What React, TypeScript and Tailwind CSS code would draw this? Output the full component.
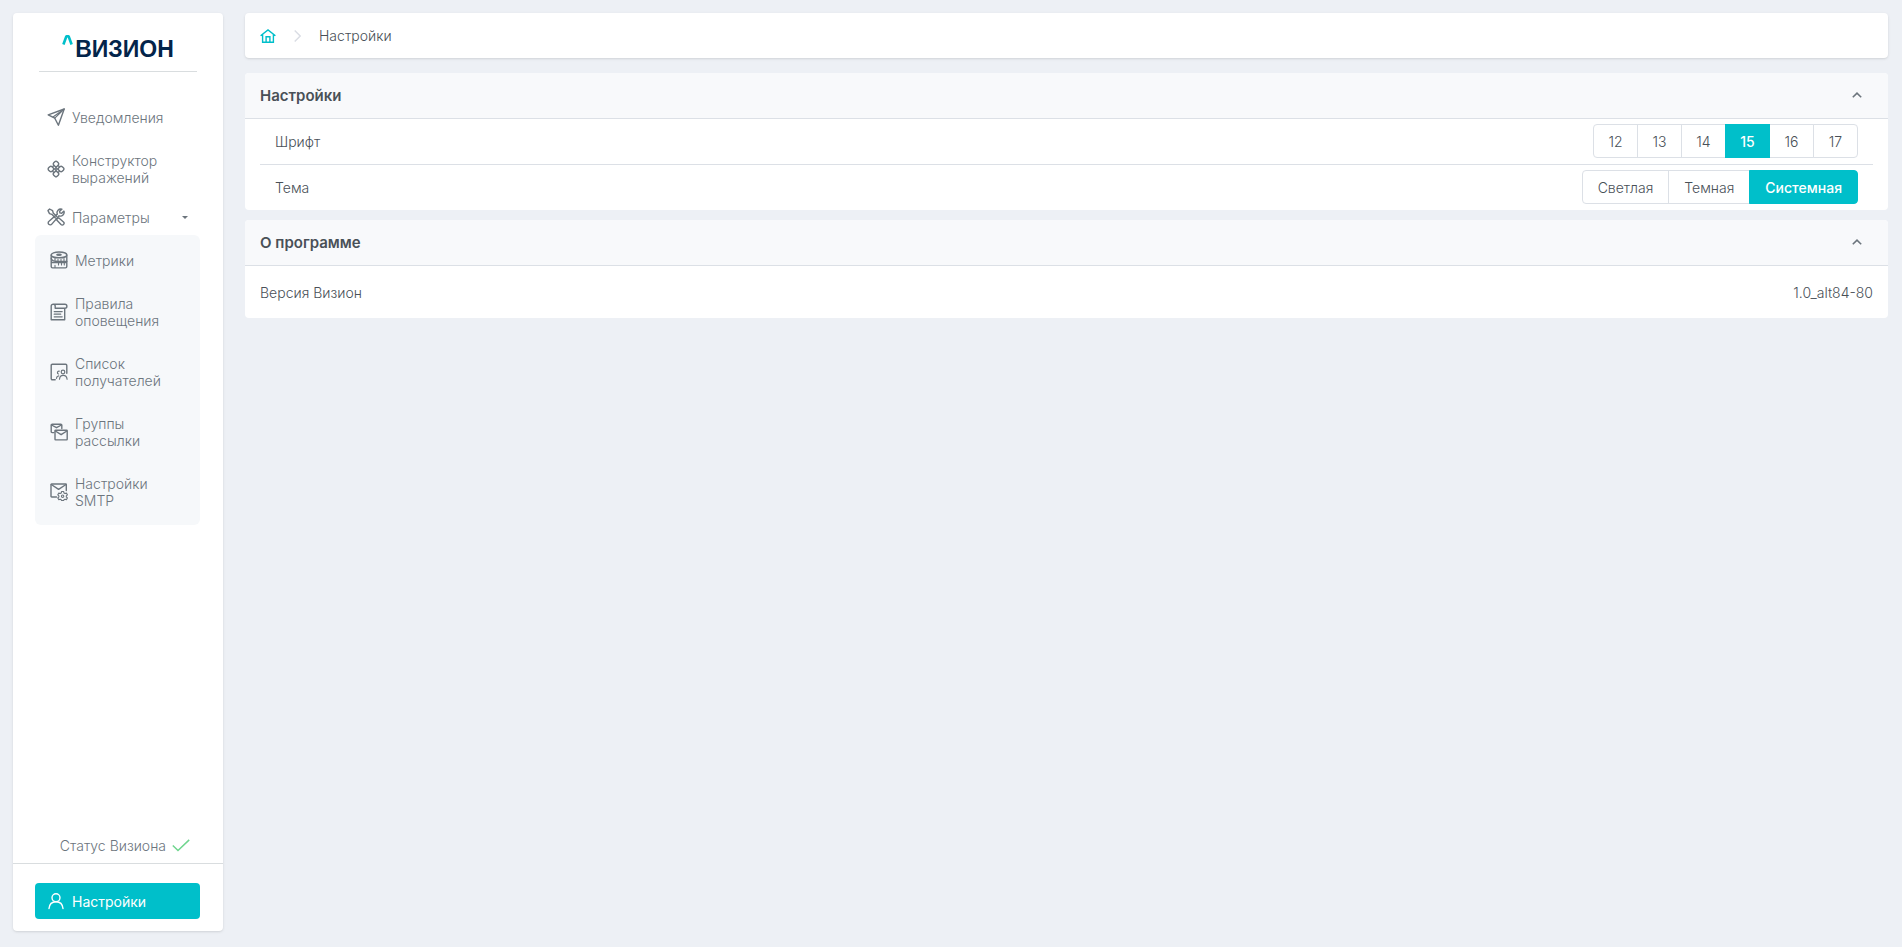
import { useState, ReactNode } from "react";
import clsx from "clsx";

const fontSizes = ["12", "13", "14", "15", "16", "17"];
const themes = ["Светлая", "Темная", "Системная"];

function Icon({ children }: { children: ReactNode }) {
  return (
    <svg
      viewBox="0 0 18 18"
      className="size-[18px] shrink-0"
      fill="none"
      stroke="currentColor"
      strokeWidth="1.4"
      strokeLinecap="round"
      strokeLinejoin="round"
      aria-hidden="true"
    >
      {children}
    </svg>
  );
}

function SendIcon() {
  return (
    <Icon>
      <path d="M17.2 1 1.2 6.8l6.6 3.4 3.6 7z" />
      <path d="M17.2 1 7.8 10.2M17.2 1 6 9" strokeWidth="1.1" />
    </Icon>
  );
}

function BlocksIcon() {
  return (
    <Icon>
      <rect x="6.6" y="1.5" width="4.8" height="4.8" rx="1.6" transform="rotate(45 9 3.9)" />
      <rect x="6.6" y="11.7" width="4.8" height="4.8" rx="1.6" transform="rotate(45 9 14.1)" />
      <rect x="1.5" y="6.6" width="4.8" height="4.8" rx="1.6" transform="rotate(45 3.9 9)" />
      <rect x="11.7" y="6.6" width="4.8" height="4.8" rx="1.6" transform="rotate(45 14.1 9)" />
      <path d="m5.8 6.6.8-.8M11.400 5.800l.8.8M5.800 11.400l.8.8M12.200 11.400l-.8.8M9 7.600 10.400 9 9 10.400 7.600 9z" />
    </Icon>
  );
}

function ToolsIcon() {
  return (
    <Icon>
      <path d="M1 2.600 2.600 1l3 1.600.6 2.300 3.600 3.700M1 2.600l1.500 3 2.300.7 3.600 3.600" />
      <path d="m10.300 10.500 1.600-.6 4.600 4.200a1.700 1.700 0 0 1-2.500 2.500l-4.300-4.500z" />
      <path d="M14.900 1.200a3.700 3.700 0 0 0-4.600 4.900L2 13.300a2 2 0 1 0 2.800 2.800l7.300-8.300a3.700 3.700 0 0 0 4.800-4.700l-2.200 2.100-1.800-.3-.3-1.700z" />
    </Icon>
  );
}

function MetricsIcon() {
  return (
    <Icon>
      <ellipse cx="9" cy="3.900" rx="7.800" ry="2.900" />
      <ellipse cx="9" cy="3.800" rx="2.200" ry=".5" />
      <path d="M1.200 4v3.200c0 1.800 3.200 3.200 7.800 3.200h7.800V4" />
      <path d="M1.200 7.200v8.400c0 .8.500 1.300 1.300 1.300h13c.8 0 1.300-.5 1.300-1.300v-5.200M2 11.500h14" />
      <path d="M5 7.600v1.600M8 8.400v1.400M11 8.400v1.400M14 7.600v1.800M5 14.400v2M8.500 12v2M11.500 12v2M14.300 12v2" strokeWidth="1.100" />
    </Icon>
  );
}

function RulesIcon() {
  return (
    <Icon>
      <path d="M3.200 1.200h11.700a1.900 1.900 0 0 1 0 4H5.200V3.100a1.900 1.900 0 0 0-4 0v13.700h13.500V5.300" />
      <path d="M4.200 8.600h8M4.200 11.200h6.500M4.200 13.800h8" strokeWidth="1.200" />
    </Icon>
  );
}

function RecipientsIcon() {
  return (
    <Icon>
      <path d="M5.200 16.800H2.400c-.8 0-1.200-.4-1.200-1.200V2.400c0-.8.4-1.200 1.200-1.200h13.200c.8 0 1.200.4 1.200 1.200v7.800" />
      <circle cx="13" cy="9" r="1.800" strokeWidth="1.200" />
      <path d="M9.500 16.200c.2-2.500 1.500-3.800 3.700-3.800s3.600 1.300 3.900 3.800" strokeWidth="1.200" />
      <path d="M9.200 8.200c-2-.3-2.400 2.400-.7 2.800M6.500 15.300c.1-1.500.8-2.200 2.200-2.400" strokeWidth="1.200" />
    </Icon>
  );
}

function GroupsIcon() {
  return (
    <Icon>
      <path d="M4 9.600H2.200c-.7 0-1-.4-1-1V2.200c0-.7.4-1 1-1h8.600c.7 0 1 .4 1 1v3.400" />
      <path d="m1.500 2 5 2.700 5-2.700" />
      <rect x="5" y="7.300" width="12.200" height="9.600" rx=".6" />
      <path d="m5.300 8 5.800 3.700L16.900 8" />
    </Icon>
  );
}

function SmtpIcon() {
  return (
    <Icon>
      <path d="M6.500 14H1.700c-.4 0-.7-.3-.7-.7V1.700c0-.4.3-.7.700-.7h13.900c.4 0 .7.300.7.700v5.800" />
      <path d="m1.300 1.500 7.300 4.800L16 1.500" />
      <path
        d="m11.600 8.500h2l.4 1.500.9.500 1.500-.4 1 1.700-1.100 1.100v1l1.100 1.100-1 1.600-1.500-.4-.9.500-.4.900h-2l-.4-.9-.9-.5-1.500.4-1-1.600 1.100-1.100v-1l-1.100-1.100 1-1.700 1.500.4.900-.5z"
        strokeWidth="1.100"
      />
      <circle cx="12.600" cy="13.200" r="1.200" strokeWidth="1.100" />
    </Icon>
  );
}

function UserIcon() {
  return (
    <Icon>
      <circle cx="9" cy="5.700" r="4" />
      <path d="M2 16.500c.4-4 3-6.800 7-6.800s6.600 2.800 7 6.800" />
    </Icon>
  );
}

function Logo() {
  return (
    <div className="flex justify-center gap-[2px] text-[#03244a]">
      <svg viewBox="0 0 11 10" className="h-[10px] w-[11px]" fill="none" stroke="#00bfca" strokeWidth="2.600" aria-hidden="true">
        <path d="M1.400 9.500 4.400 1.300h2.200l3 8.200" strokeLinejoin="bevel" />
      </svg>
      <span className="font-['Liberation_Sans',sans-serif] text-[23px] leading-7 font-bold">ВИЗИОН</span>
    </div>
  );
}

interface NavItemProps {
  icon: ReactNode;
  children: ReactNode;
}

function SubItem({ icon, children }: NavItemProps) {
  return (
    <li>
      <a href="#" className="flex min-h-11 items-center gap-[7px] py-[13px] pr-6 pl-[15px]">
        {icon}
        <span>{children}</span>
      </a>
    </li>
  );
}

function Sidebar() {
  return (
    <aside className="flex w-[210px] shrink-0 flex-col rounded-sm bg-white pt-[22px] text-[#6c757d] shadow-sm">
      <Logo />
      <hr className="mx-[26px] mt-2 border-[#d9dddf]" />
      <nav className="mt-[23px] pr-[23px] pl-[22px]">
        <ul>
          <li>
            <a href="#" className="flex min-h-11 items-center gap-[7px] px-3">
              <SendIcon />
              <span>Уведомления</span>
            </a>
          </li>
          <li>
            <a href="#" className="flex items-center gap-[7px] px-3 py-[13px]">
              <BlocksIcon />
              <span>Конструктор выражений</span>
            </a>
          </li>
          <li>
            <button type="button" aria-expanded="true" className="flex h-9 w-full items-center gap-[7px] px-3 text-left">
              <ToolsIcon />
              <span className="flex-1">Параметры</span>
              <svg viewBox="0 0 6 3" className="h-[3px] w-[6px]" fill="currentColor" aria-hidden="true">
                <path d="M0 0h6L3 3z" />
              </svg>
            </button>
            <ul className="rounded-md bg-[#f6f8fa] py-[3px]">
              <SubItem icon={<MetricsIcon />}>Метрики</SubItem>
              <SubItem icon={<RulesIcon />}>Правила оповещения</SubItem>
              <SubItem icon={<RecipientsIcon />}>Список получателей</SubItem>
              <SubItem icon={<GroupsIcon />}>Группы рассылки</SubItem>
              <SubItem icon={<SmtpIcon />}>Настройки SMTP</SubItem>
            </ul>
          </li>
        </ul>
      </nav>
      <div className="mt-auto flex items-center justify-end gap-[6px] border-b border-[#d9dddf] pr-[33px] pb-[9px]">
        <span>Статус Визиона</span>
        <svg viewBox="0 0 18 13" className="h-[13px] w-[18px]" fill="none" stroke="#6fd58e" strokeWidth="1.500" role="img" aria-label="OK">
          <path d="m.8 6.500 5.200 5L17.200.9" />
        </svg>
      </div>
      <div className="pt-[19px] pr-[23px] pb-3 pl-[22px]">
        <a href="#" className="flex h-9 items-center gap-[7px] rounded-sm bg-[#00bfca] px-3 font-normal text-white">
          <UserIcon />
          <span>Настройки</span>
        </a>
      </div>
    </aside>
  );
}

interface PanelProps {
  title: string;
  children: ReactNode;
}

function Panel({ title, children }: PanelProps) {
  const [open, setOpen] = useState(true);

  return (
    <section className="rounded-sm bg-white">
      <h2>
        <button
          type="button"
          onClick={() => setOpen(!open)}
          aria-expanded={open}
          className="flex h-[46px] w-full items-center justify-between rounded-t-sm border-b border-[#dce0e6] bg-[#f8f9fb] pr-[26px] pl-[15px] text-[15px] font-semibold"
        >
          {title}
          <svg
            viewBox="0 0 10 6"
            className={clsx("mb-[2px] h-[6px] w-[10px]", !open && "rotate-180")}
            fill="none"
            stroke="#6c757d"
            strokeWidth="1.600"
            aria-hidden="true"
          >
            <path d="M.8 5.300 5 1.200l4.200 4.100" />
          </svg>
        </button>
      </h2>
      {open && children}
    </section>
  );
}

interface ButtonGroupProps {
  label: string;
  options: string[];
  initial: string;
  buttonClassName: string;
}

function ButtonGroup({ label, options, initial, buttonClassName }: ButtonGroupProps) {
  const [selected, setSelected] = useState(initial);

  return (
    <div role="group" aria-label={label} className="flex">
      {options.map((option) => (
        <button
          key={option}
          type="button"
          aria-pressed={option === selected}
          onClick={() => setSelected(option)}
          className={clsx(
            "-ml-px h-[34px] border first:ml-0 first:rounded-l-sm last:rounded-r-sm",
            buttonClassName,
            option === selected
              ? "relative border-[#00bfca] bg-[#00bfca] font-medium text-white"
              : "border-[#dce0e6] bg-white"
          )}
        >
          {option}
        </button>
      ))}
    </div>
  );
}

export default function App() {
  return (
    <div className="flex min-h-screen gap-[22px] bg-[#edf0f5] pt-[13px] pr-[14px] pb-4 pl-[13px] font-['Inter',sans-serif] text-[14px] leading-[17px] font-light text-[#495057]">
      <Sidebar />
      <main className="min-w-0 flex-1">
        <nav aria-label="Навигация" className="flex h-[45px] items-center rounded-sm bg-white px-[15px] shadow-sm">
          <a href="#" aria-label="Главная" className="text-[#00bfca]">
            <svg viewBox="0 0 16 14" className="h-[14px] w-4" fill="none" stroke="currentColor" strokeWidth="1.400" aria-hidden="true">
              <path d="M.6 6.800 8 1l7.400 5.800M2.600 5.500v7.800h10.800V5.500M6.100 13V7.700h3.800V13" />
            </svg>
          </a>
          <svg viewBox="0 0 7 12" className="mx-[18px] h-3 w-[7px]" fill="none" stroke="#dadde4" strokeWidth="1.400" aria-hidden="true">
            <path d="m.7.5 5.500 5.500-5.500 5.500" />
          </svg>
          <span>Настройки</span>
        </nav>
        <div className="mt-[15px] flex flex-col gap-[10px]">
          <Panel title="Настройки">
            <div className="px-[15px]">
              <div className="flex items-center justify-between border-b border-[#dce0e6] px-[15px] pt-[5px] pb-[6px]">
                <span>Шрифт</span>
                <ButtonGroup label="Шрифт" options={fontSizes} initial="15" buttonClassName="w-[45px]" />
              </div>
              <div className="flex items-center justify-between px-[15px] pt-[5px] pb-[6px]">
                <span>Тема</span>
                <ButtonGroup label="Тема" options={themes} initial="Системная" buttonClassName="px-[15px]" />
              </div>
            </div>
          </Panel>
          <Panel title="О программе">
            <div className="flex h-[52px] items-center justify-between px-[15px]">
              <span>Версия Визион</span>
              <span>1.0_alt84-80</span>
            </div>
          </Panel>
        </div>
      </main>
    </div>
  );
}
